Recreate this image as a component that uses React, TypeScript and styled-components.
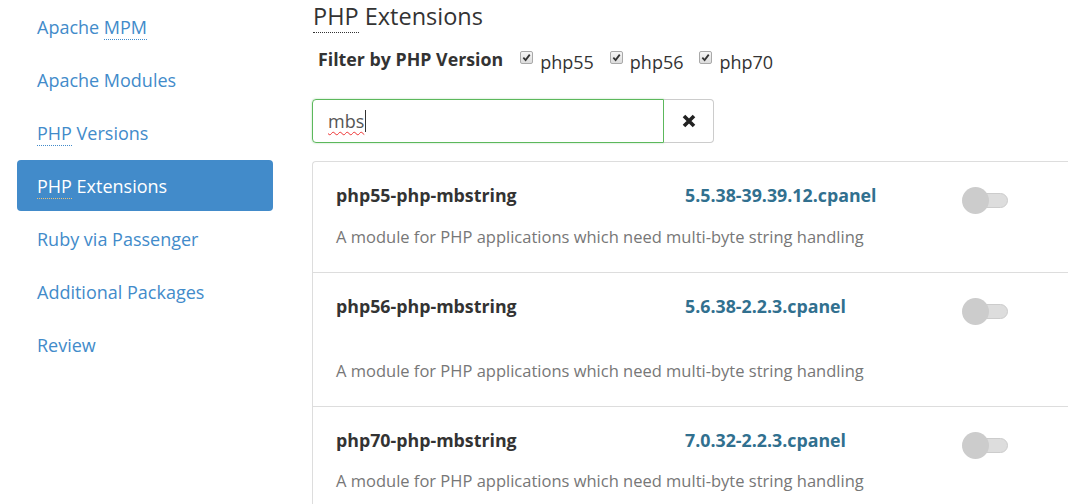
import React from "react";
import styled, { createGlobalStyle } from "styled-components";

const Global = createGlobalStyle`
  html, body { margin: 0; padding: 0; background: #fff; overflow: hidden; }
  body { font-family: "Open Sans", "Liberation Sans", sans-serif; color: #333; }
  * { box-sizing: border-box; }
`;

const Page = styled.div`
  display: flex;
  align-items: flex-start;
  width: 1068px;
  height: 504px;
  overflow: hidden;
  padding-left: 17px;
`;

const Sidebar = styled.nav`
  width: 256px;
  flex: none;
  display: flex;
  flex-direction: column;
  gap: 2px;
  padding-top: 1px;
`;

const NavItem = styled.div<{ $active?: boolean }>`
  height: 51px;
  display: flex;
  align-items: center;
  padding-left: 20px;
  font-size: 18px;
  border-radius: 4px;
  color: ${(p) => (p.$active ? "#fff" : "#428bca")};
  background: ${(p) => (p.$active ? "#428bca" : "transparent")};
`;

const Abbr = styled.abbr<{ $light?: boolean }>`
  text-decoration: none;
  border-bottom: 1px dotted ${(p) => (p.$light ? "#e8c27a" : "#428bca")};
  line-height: 1.15;
`;

const Main = styled.main`
  margin-left: 39px;
  flex: none;
  width: 800px;
  display: flex;
  flex-direction: column;
  & > * { flex: none; }
`;

const Heading = styled.h2`
  margin: 0;
  padding-left: 1px;
  font-size: 23.5px;
  font-weight: 400;
  line-height: 32px;
  color: #333;
`;

const HeadAbbr = styled.abbr`
  text-decoration: none;
  border-bottom: 1px dotted #333;
  line-height: 1.1;
`;

const FilterRow = styled.div`
  display: flex;
  align-items: center;
  margin-top: 10px;
  padding-left: 6px;
  height: 34px;
`;

const FilterLabel = styled.span`
  font-weight: 700;
  font-size: 17.8px;
  margin-right: 17px;
`;

const CheckLabel = styled.label`
  display: flex;
  align-items: center;
  font-size: 18px;
  margin-right: 16px;
  padding-top: 5px;
`;

const Box = styled.span`
  width: 13px;
  height: 13px;
  border: 1px solid #a9a9a9;
  border-radius: 2px;
  background: linear-gradient(#f6f6f6, #dcdcdc);
  margin-right: 7px;
  margin-top: -8px;
  display: inline-flex;
  align-items: center;
  justify-content: center;
`;

const SearchGroup = styled.div`
  display: flex;
  margin-top: 23px;
  width: 402px;
  height: 44px;
`;

const SearchInput = styled.div`
  flex: 1;
  border: 1px solid #5cb85c;
  border-radius: 4px 0 0 4px;
  box-shadow: 0 0 2px rgba(92, 184, 92, 0.5);
  display: flex;
  align-items: center;
  padding-left: 15px;
  font-size: 18px;
  color: #555;
`;

const Typed = styled.span`
  text-decoration: underline wavy #e33;
  text-decoration-thickness: 1px;
  text-underline-offset: 3px;
  border-right: 1px solid #333;
  padding-right: 1px;
  line-height: 22px;
`;

const ClearButton = styled.button`
  width: 50px;
  border: 1px solid #ccc;
  border-left: none;
  border-radius: 0 4px 4px 0;
  background: #fff;
  display: flex;
  align-items: center;
  justify-content: center;
  padding: 0;
`;

const List = styled.div`
  margin-top: 18px;
  border: 1px solid #ddd;
  border-right: none;
  border-radius: 4px 0 0 0;
  width: 790px;
`;

const Row = styled.div<{ $h: number }>`
  height: ${(p) => p.$h}px;
  border-top: 1px solid #ddd;
  &:first-child { border-top: none; }
  padding: 22px 0 0 23px;
  display: grid;
  grid-template-columns: 349px 277px 60px;
  grid-template-rows: 22px auto;
  align-content: start;
`;

const Name = styled.div`
  font-weight: 700;
  font-size: 17.8px;
  line-height: 22px;
  color: #333;
`;

const Version = styled.div`
  font-weight: 700;
  font-size: 17.8px;
  line-height: 22px;
  color: #31708f;
`;

const ToggleCell = styled.div`
  position: relative;
  height: 22px;
`;

const Track = styled.span`
  position: absolute;
  left: 11px;
  top: 9px;
  width: 35px;
  height: 15px;
  border-radius: 8px;
  background: #ddd;
  border: 1px solid #ccc;
`;

const Knob = styled.span`
  position: absolute;
  left: 0;
  top: 3px;
  width: 27px;
  height: 27px;
  border-radius: 50%;
  background: #ccc;
`;

const Desc = styled.div<{ $gap: number }>`
  grid-column: 1 / -1;
  margin-top: ${(p) => p.$gap}px;
  font-size: 16.5px;
  line-height: 22px;
  color: #777;
`;

const items = [
  { k: "mpm", label: <span>Apache <Abbr>MPM</Abbr></span> },
  { k: "mods", label: <span>Apache Modules</span> },
  { k: "phpv", label: <span><Abbr>PHP</Abbr> Versions</span> },
  { k: "phpe", label: <span><Abbr $light>PHP</Abbr> Extensions</span>, active: true },
  { k: "ruby", label: <span>Ruby via Passenger</span> },
  { k: "add", label: <span>Additional Packages</span> },
  { k: "rev", label: <span>Review</span> },
];

const pkgs = [
  { name: "php55-php-mbstring", ver: "5.5.38-39.39.12.cpanel", h: 110, gap: 20 },
  { name: "php56-php-mbstring", ver: "5.6.38-2.2.3.cpanel", h: 134, gap: 43 },
  { name: "php70-php-mbstring", ver: "7.0.32-2.2.3.cpanel", h: 110, gap: 19 },
];

const Check = () => (
  <Box>
    <svg width="9" height="9" viewBox="0 0 10 10">
      <path d="M1.5 5.2 L4 7.8 L8.6 1.8" fill="none" stroke="#333" strokeWidth="2" />
    </svg>
  </Box>
);

export default function App() {
  return (
    <>
      <Global />
      <Page>
        <Sidebar>
          {items.map((it) => (
            <NavItem key={it.k} $active={it.active}>{it.label}</NavItem>
          ))}
        </Sidebar>
        <Main>
          <Heading><HeadAbbr>PHP</HeadAbbr> Extensions</Heading>
          <FilterRow>
            <FilterLabel>Filter by PHP Version</FilterLabel>
            {["php55", "php56", "php70"].map((v) => (
              <CheckLabel key={v}><Check />{v}</CheckLabel>
            ))}
          </FilterRow>
          <SearchGroup>
            <SearchInput><Typed>mbs</Typed></SearchInput>
            <ClearButton aria-label="clear">
              <svg width="14" height="14" viewBox="0 0 14 14">
                <path d="M2 2 L12 12 M12 2 L2 12" stroke="#222" strokeWidth="3.6" strokeLinecap="butt" />
              </svg>
            </ClearButton>
          </SearchGroup>
          <List>
            {pkgs.map((p) => (
              <Row key={p.name} $h={p.h}>
                <Name>{p.name}</Name>
                <Version>{p.ver}</Version>
                <ToggleCell><Track /><Knob /></ToggleCell>
                <Desc $gap={p.gap}>A module for PHP applications which need multi-byte string handling</Desc>
              </Row>
            ))}
          </List>
        </Main>
      </Page>
    </>
  );
}
